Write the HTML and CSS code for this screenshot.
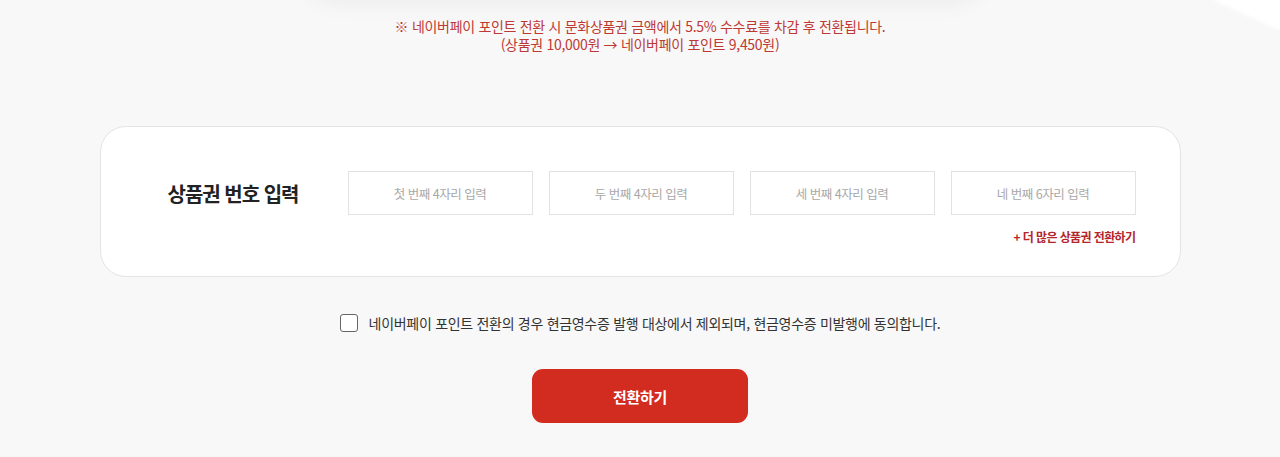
FILE: index.html
```html
<!DOCTYPE html>
<html lang="ko">
<head>
    <meta charset="UTF-8">
    <meta name="viewport" content="width=device-width, initial-scale=1.0">
    <title>네이버페이 포인트 전환</title>
    <link rel="stylesheet" href="styles.css">
</head>
<body>
    <div class="top-shade"></div>
    <div class="corner"></div>
    <div class="wrap">
        <p class="notice">
            ※ 네이버페이 포인트 전환 시 문화상품권 금액에서 5.5% 수수료를 차감 후 전환됩니다.<br>
            (상품권 10,000원 → 네이버페이 포인트 9,450원)
        </p>

        <div class="card">
            <div class="card-row">
                <h2 class="label">상품권 번호 입력</h2>
                <div class="pins">
                    <input type="text" class="pin" placeholder="첫 번째 4자리 입력" maxlength="4">
                    <input type="text" class="pin" placeholder="두 번째 4자리 입력" maxlength="4">
                    <input type="text" class="pin" placeholder="세 번째 4자리 입력" maxlength="4">
                    <input type="text" class="pin" placeholder="네 번째 6자리 입력" maxlength="6">
                </div>
            </div>
            <div class="more">
                <a href="#" class="more-link">+ 더 많은 상품권 전환하기</a>
            </div>
        </div>

        <label class="agree">
            <input type="checkbox" class="agree-box">
            <span>네이버페이 포인트 전환의 경우 현금영수증 발행 대상에서 제외되며, 현금영수증 미발행에 동의합니다.</span>
        </label>

        <div class="actions">
            <button type="button" class="btn-submit">전환하기</button>
        </div>
    </div>
</body>
</html>
```

FILE: styles.css
```css
* {
    box-sizing: border-box;
}
body {
    font-family: "Noto Sans CJK KR", "Noto Sans", sans-serif;
    background-color: #f8f8f8;
    margin: 0;
    padding: 0;
    color: #333;
    overflow: hidden;
}
.top-shade {
    position: absolute;
    top: -70px;
    left: 300px;
    width: 690px;
    height: 70px;
    border-radius: 0 0 40px 40px;
    background-color: #f8f8f8;
    box-shadow: 0 2px 24px rgba(0,0,0,0.06);
}
.corner {
    position: absolute;
    top: 0;
    right: 0;
    width: 66px;
    height: 30px;
    background: linear-gradient(205deg, #fff 46%, rgba(255,255,255,0) 56%);
}
.wrap {
    width: 1081px;
    margin: 0 auto;
    padding-top: 17px;
}
.notice {
    margin: 0;
    text-align: center;
    font-size: 14px;
    line-height: 18px;
    letter-spacing: -0.3px;
    color: #bd3934;
}
.card {
    margin-top: 73px;
    height: 151px;
    background-color: #fff;
    border: 1px solid #e4e4e4;
    border-radius: 26px;
    padding: 44px 44px 0 67px;
}
.card-row {
    display: flex;
    align-items: center;
}
.label {
    width: 180px;
    flex-shrink: 0;
    margin: 0;
    font-size: 20px;
    font-weight: 700;
    letter-spacing: -1px;
    color: #222;
}
.pins {
    display: flex;
    gap: 16px;
}
.pin {
    width: 185px;
    height: 44px;
    border: 1px solid #e2e2e2;
    background-color: #fff;
    text-align: center;
    font-family: inherit;
    font-size: 12.5px;
    letter-spacing: -0.5px;
    color: #333;
    outline: none;
}
.pin::placeholder {
    color: #a8a8a8;
}
.more {
    display: flex;
    justify-content: flex-end;
    margin-top: 13px;
}
.more-link {
    font-size: 12px;
    font-weight: 700;
    letter-spacing: -0.6px;
    color: #b3262b;
    text-decoration: none;
}
.agree {
    display: flex;
    align-items: center;
    justify-content: center;
    gap: 11px;
    margin-top: 36px;
    font-size: 14px;
    letter-spacing: -0.3px;
    color: #333;
    cursor: pointer;
}
.agree-box {
    appearance: none;
    width: 18px;
    height: 18px;
    margin: 0;
    border: 1.5px solid #666;
    border-radius: 3px;
    background-color: #fff;
}
.actions {
    display: flex;
    justify-content: center;
    margin-top: 36px;
}
.btn-submit {
    width: 216px;
    height: 54px;
    border: none;
    border-radius: 11px;
    background-color: #d22b1f;
    color: #fff;
    font-family: inherit;
    font-size: 15px;
    font-weight: 700;
    letter-spacing: -0.3px;
    cursor: pointer;
}
```
